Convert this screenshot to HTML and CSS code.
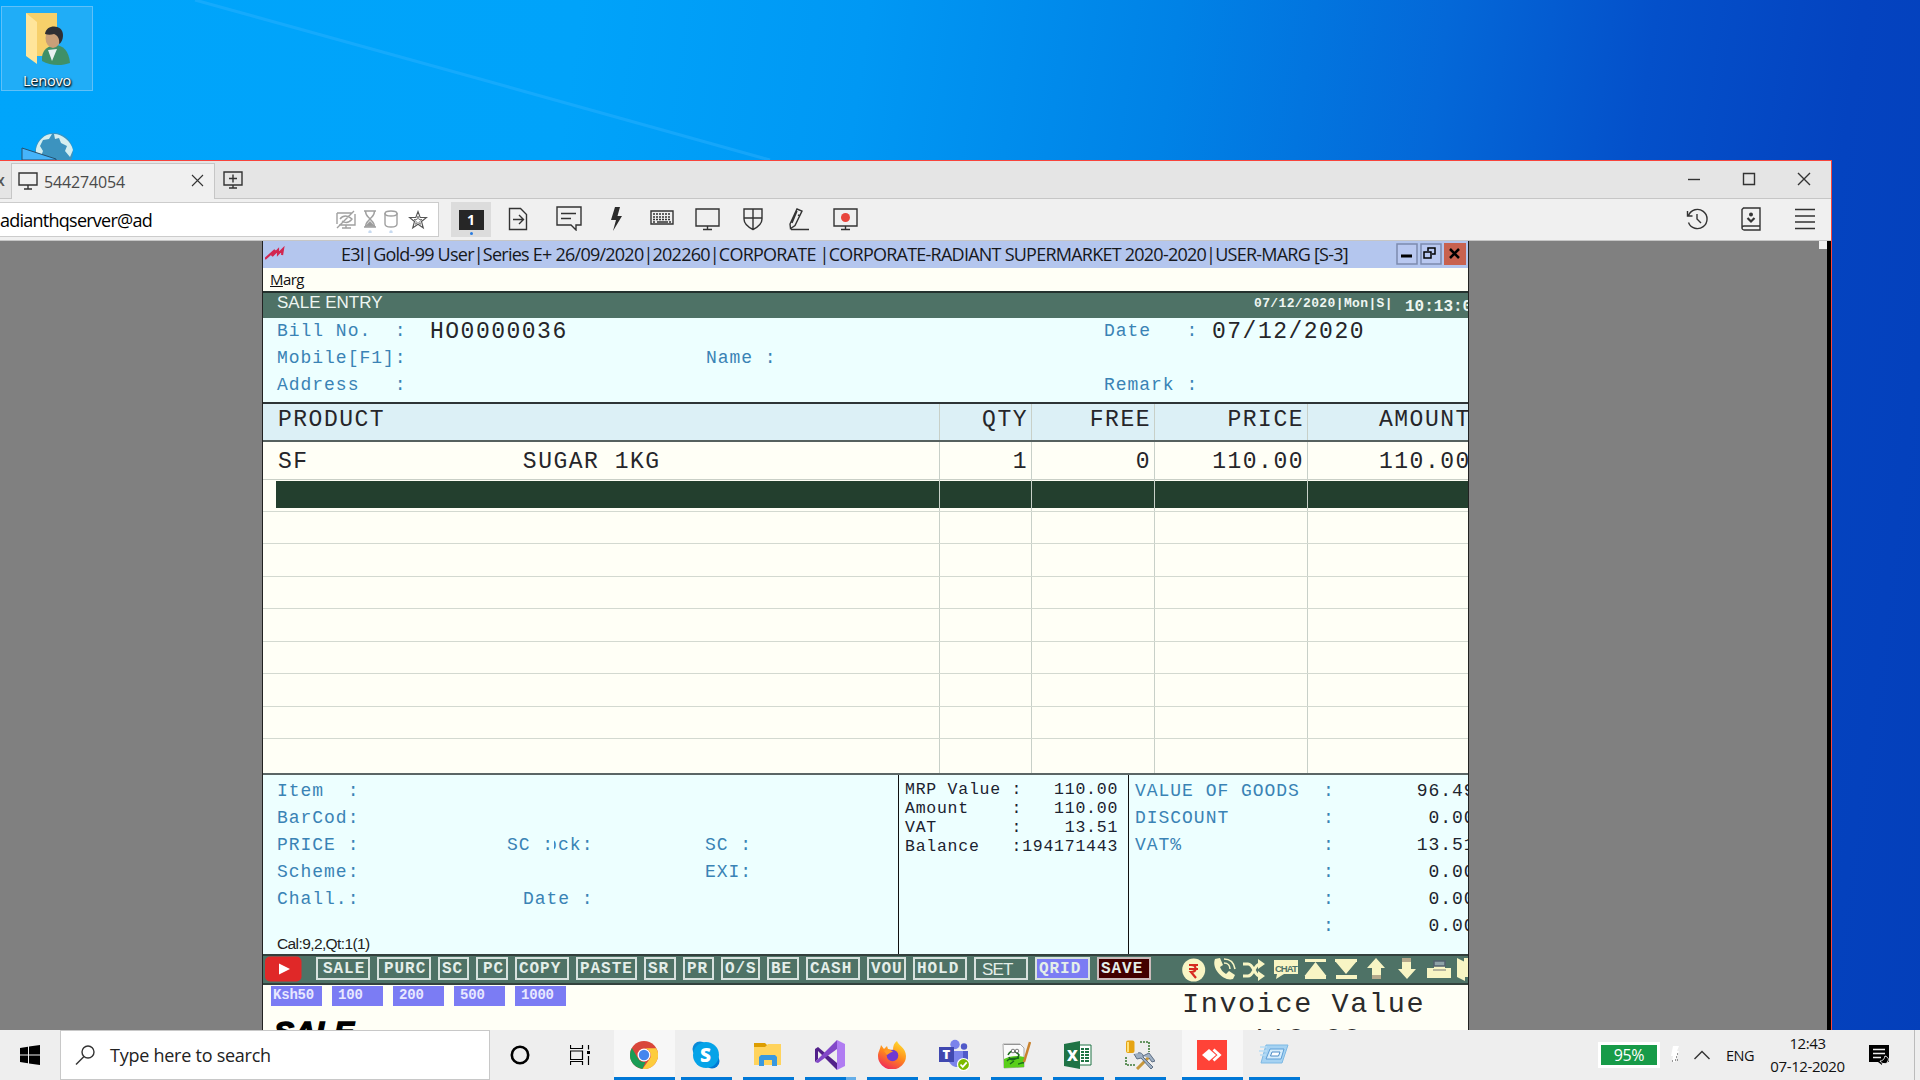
FILE: index.html
```html
<!DOCTYPE html>
<html lang="en">
<head>
<meta charset="utf-8">
<title>Desktop</title>
<link rel="stylesheet" href="styles.css">
</head>
<body>
<div class="desktop">
  <svg class="beam" width="900" height="160" viewBox="0 0 900 160"><defs><linearGradient id="bm" x1="0" y1="1" x2="0.25" y2="0"><stop offset="0" stop-color="#0091f0" stop-opacity="0"/><stop offset="1" stop-color="#0086e6" stop-opacity="0"/></linearGradient></defs><path d="M195 0L480 80 770 160H900V0z" fill="url(#bm)"/><path d="M195 0L480 79 770 160" fill="none" stroke="#35b4ff" stroke-opacity=".4" stroke-width="3"/></svg>
  <div class="shortcut">
    <svg width="48" height="56" viewBox="0 0 48 56"><path d="M3 3h31v43H14z" fill="#f7d06a"/><path d="M3 3l11 9v42L3 46z" fill="#ffe59a"/><path d="M19 47c1-8 6-11 13-12 8 0 14 6 15 18-8 3-20 3-28-2z" fill="#3f9068"/><path d="M25 40l4 11 5-12z" fill="#e8f1f2"/><ellipse cx="30" cy="28" rx="7.500" ry="10" fill="#c99f78"/><path d="M22 24c1-10 18-10 18 1 0 5-2 8-4 9 1-6-2-9-5-10-3 1-6 1-9 0z" fill="#2f2f33"/></svg>
    <span>Lenovo</span>
  </div>
  <svg class="globe" width="56" height="28" viewBox="0 0 56 28"><circle cx="33" cy="20" r="19" fill="#3c93bf"/><path d="M15 17c2-9 9-15 16-15l-3 5-6 1-3 6 3 5-3 8h-4zM33 2c8 0 17 7 19 16l-3 7-5-6 2-5-6-3-2-5-4 1z" fill="#d4eef0"/><path d="M1 16l34 11v1H1z" fill="#46b4fa" stroke="#25506e"/></svg>

  <div class="window">
    <div class="tabs">
      <span class="tab-cut">x</span>
      <div class="tab">
        <svg width="20" height="18" viewBox="0 0 20 18" class="ic"><path d="M1 1h18v12H1zM10 13v4M6 17h8"/></svg>
        <span class="tab-id">544274054</span>
        <svg width="13" height="13" viewBox="0 0 13 13" class="ic thin"><path d="M1 1l11 11M12 1L1 12"/></svg>
      </div>
      <svg width="20" height="18" viewBox="0 0 20 18" class="ic newtab"><path d="M1 1h18v13H1zM10 14v3M6 17h8M10 3.500v8M6 7.500h8"/></svg>
      <div class="winbtns">
        <svg width="14" height="14" viewBox="0 0 14 14" class="ic"><path d="M1 7.500h12"/></svg>
        <svg width="14" height="14" viewBox="0 0 14 14" class="ic"><path d="M1.500 1.500h11v11h-11z"/></svg>
        <svg width="14" height="14" viewBox="0 0 14 14" class="ic"><path d="M1 1l12 12M13 1L1 13"/></svg>
      </div>
    </div>
    <div class="toolbar">
      <div class="address">
        <span class="addr-text">adianthqserver@ad</span>
        <svg width="20" height="20" viewBox="0 0 20 20" class="ic pale"><path d="M1 3h15M19 4v11H3M1 3v11M10 15v3M6 18h9M1 18L18 1M4 9c3-4 8-4 12 0-3 4-7 4-10 2"/></svg>
        <svg width="14" height="26" viewBox="0 0 14 26" class="ic pale"><path d="M1 4h12M1 20h12M2.500 4c0 5 3 6 4.500 8-1.500 2-4.500 3-4.500 8M11.500 4c0 5-3 6-4.500 8 1.500 2 4.500 3 4.500 8"/><path d="M3 19l4-4 4 4z" fill="#999"/><circle cx="7" cy="25" r="1" stroke="#c5d9f0"/></svg>
        <svg width="14" height="26" viewBox="0 0 14 26" class="ic pale"><ellipse cx="7" cy="6.500" rx="6" ry="2.500"/><path d="M1 6v11c0 4 12 4 12 0V6"/><circle cx="7" cy="25" r="1" stroke="#c5d9f0"/></svg>
        <svg width="20" height="20" viewBox="0 0 20 20" class="ic star"><path d="M10 1.500l2.200 6h6.300l-5 4 1.800 6.500L10 14.200 4.700 18l1.800-6.500-5-4h6.300z"/><path d="M10 6l1 3.500h3l-2.300 2 .8 2.800L10 12.600l-2.500 1.700.8-2.800-2.300-2h3z" stroke-width=".7"/></svg>
      </div>
      <div class="monitor-btn"><b>1</b><i></i></div>
      <div class="tools">
        <svg width="20" height="24" viewBox="0 0 20 24" class="ic"><path d="M1.500 1.500h11l6 6v15h-17zM5 12.500h10M11 8l4.500 4.500L11 17"/></svg>
        <svg width="26" height="25" viewBox="0 0 26 25" class="ic"><path d="M1 1h24v18h-5v5l-5-5H1zM5 7.500h15M5 12.500h10"/></svg>
        <svg width="13" height="26" viewBox="0 0 13 26"><path d="M5 1h5L7.500 10H12L3 25l3-11H1z" fill="#2b2b2b"/></svg>
        <svg width="24" height="24" viewBox="0 0 24 24" class="ic"><path d="M1 4h22v13H1z"/><path d="M3 7h18M3 10h18M3 12.500h18" stroke-dasharray="2 1"/><path d="M3 15h2M7 15h11M19 15h2"/></svg>
        <svg width="25" height="24" viewBox="0 0 25 24" class="ic"><path d="M1 2h23v17H1zM12.500 19v4M8 22.500h9"/></svg>
        <svg width="20" height="24" viewBox="0 0 20 24" class="ic"><path d="M1 2h18v10c0 5-4 8-9 10.500C5 20 1 17 1 12zM10 2v20M1 11h18"/></svg>
        <svg width="20" height="24" viewBox="0 0 20 24" class="ic"><path d="M2 22.500h18M1.500 21.500L1 17 8 2l5 2-7 14.500zM8 4l-5 12M9 8l2 1M1.500 21.500L6 18.500"/></svg>
        <svg width="25" height="24" viewBox="0 0 25 24" class="ic"><path d="M1 2h23v17H1zM12.500 19v4M8 22.500h9"/><circle cx="12.500" cy="10.500" r="4.500" fill="#e8453c" stroke="none"/></svg>
      </div>
      <div class="right-tools">
        <svg width="22" height="24" viewBox="0 0 22 24" class="ic"><path d="M2.500 8.500a9.600 9.600 0 1 1 0 7M1.500 4v5h5M11 7v5l4 4"/></svg>
        <svg width="20" height="24" viewBox="0 0 20 24" class="ic"><path d="M1 2.500L2.500 1H19v22H3c-1 0-2-1-2-2zM1 21c0-1 1-2 2-2h16"/><circle cx="10" cy="7.500" r="2" fill="#333" stroke="none"/><path d="M6.500 11l3.500 3.500 3.500-3.500" stroke-width="2.200"/></svg>
        <svg width="22" height="24" viewBox="0 0 22 24" class="ic"><path d="M1 2.500h20M1 9h20M1 15h20M1 21.500h20"/></svg>
      </div>
    </div>
    <div class="viewport">
      <div class="guest">
        <div class="g-title">
          <svg width="22" height="14" viewBox="0 0 22 14"><path d="M0 13l10-9-3 6 6-6 0 4 5-5-1 6" fill="none" stroke="#d2264f" stroke-width="2.200"/></svg>
          <span class="g-caption">E3I|Gold-99 User|Series E+ 26/09/2020|202260|CORPORATE |CORPORATE-RADIANT SUPERMARKET 2020-2020|USER-MARG [S-3]</span>
          <div class="g-btns">
            <svg width="22" height="22" viewBox="0 0 22 22"><rect x="1" y="1" width="20" height="20" fill="#b9c8f0" stroke="#7c8aae" stroke-width="1.500"/><path d="M5 13h11" stroke="#000" stroke-width="3"/></svg>
            <svg width="22" height="22" viewBox="0 0 22 22"><rect x="1" y="1" width="20" height="20" fill="#b9c8f0" stroke="#7c8aae" stroke-width="1.500"/><path d="M4 9h7v6H4zM8 8V5h7v6h-3" fill="none" stroke="#000" stroke-width="1.500"/></svg>
            <svg width="22" height="22" viewBox="0 0 22 22"><rect width="22" height="22" fill="#c8624f"/><path d="M6 6l9 9M15 6l-9 9" stroke="#000" stroke-width="2.500"/></svg>
          </div>
        </div>
        <div class="g-menu"><u>M</u>arg</div>
        <div class="g-head"><span class="g-mod">SALE ENTRY</span><span class="g-date">07/12/2020|Mon|S|</span><span class="g-clock">10:13:09</span></div>
        <div class="bill">
          <div class="lbl">Bill No.  :</div><div class="big">HO0000036</div><div></div><div class="lbl">Date   :</div><div class="big">07/12/2020</div>
          <div class="lbl">Mobile[F1]:</div><div></div><div class="lbl">Name :</div><div></div><div></div>
          <div class="lbl">Address   :</div><div></div><div></div><div class="lbl">Remark :</div><div></div>
        </div>
        <div class="items big">
          <div class="row head"><div>PRODUCT</div><div>QTY</div><div>FREE</div><div>PRICE</div><div>AMOUNT</div></div>
          <div class="row first"><div>SF              SUGAR 1KG</div><div>1</div><div>0</div><div>110.00</div><div>110.00</div></div>
          <div class="row sel"><div><i></i></div><div></div><div></div><div></div><div></div></div>
          <div class="row"><div></div><div></div><div></div><div></div><div></div></div>
          <div class="row"><div></div><div></div><div></div><div></div><div></div></div>
          <div class="row"><div></div><div></div><div></div><div></div><div></div></div>
          <div class="row"><div></div><div></div><div></div><div></div><div></div></div>
          <div class="row"><div></div><div></div><div></div><div></div><div></div></div>
          <div class="row"><div></div><div></div><div></div><div></div><div></div></div>
          <div class="row"><div></div><div></div><div></div><div></div><div></div></div>
          <div class="row last"><div></div><div></div><div></div><div></div><div></div></div>
        </div>
        <div class="summary">
          <div class="detail">
            <div class="detail-grid lbl">
              <div>Item  :</div><div></div><div></div>
              <div>BarCod:</div><div></div><div></div>
              <div>PRICE :</div><div class="stock"><span>SC :</span><span class="sliver">o</span><span>ck:</span></div><div>SC :</div>
              <div>Scheme:</div><div></div><div>EXI:</div>
              <div>Chall.:</div><div class="ddate">Date :</div><div></div>
            </div>
            <div class="cal">Cal:9,2,Qt:1(1)</div>
          </div>
          <div class="mrp"><div>MRP Value :   110.00</div><div>Amount    :   110.00</div><div>VAT       :    13.51</div><div>Balance   :194171443</div></div>
          <div class="totals lbl">
            <div>VALUE OF GOODS</div><div>:</div><div class="num"> 96.49</div>
            <div>DISCOUNT</div><div>:</div><div class="num">  0.00</div>
            <div>VAT%</div><div>:</div><div class="num"> 13.51</div>
            <div></div><div>:</div><div class="num">  0.00</div>
            <div></div><div>:</div><div class="num">  0.00</div>
            <div></div><div>:</div><div class="num">  0.00</div>
          </div>
        </div>
        <div class="actions">
          <svg class="yt" width="37" height="26" viewBox="0 0 37 26"><rect y="0.500" width="36.500" height="25" rx="5" fill="#e02828"/><path d="M14 7.500l11 5.500-11 5.500z" fill="#fff"/></svg>
          <div class="keys">
            <span class="r">SALE</span><span class="r">PURC</span><span>SC</span><span class="r">PC</span><span>COPY</span><span>PASTE</span><span>SR</span><span>PR</span><span>O/S</span><span>BE</span><span>CASH</span><span>VOU</span><span>HOLD</span><span class="set">SET</span><span class="qrid">QRID</span><span class="save">SAVE</span>
          </div>
          <svg class="tray-icons" width="288" height="26" viewBox="1180 956 288 26" fill="#f8f5c4">
            <circle cx="1193.700" cy="970" r="11.500"/><path d="M1189 965h9M1189 969h9M1191 965c6 0 6 7 0 7l5 6" fill="none" stroke="#d62a20" stroke-width="2.200"/>
            <path d="M1215 959l5-1 3 7-3 2c1 3 3 5 6 7l3-3 6 4-2 4c-9 3-22-10-18-20z"/><path d="M1224 963c4 0 6 3 6 6M1224 959c6 0 10 4 11 10" fill="none" stroke="#f8f5c4" stroke-width="1.600"/>
            <path d="M1243 964h5c6 0 6 12 12 12M1243 976h5c6 0 6-12 12-12" fill="none" stroke="#f8f5c4" stroke-width="3"/><path d="M1258 959l7 5-7 5zM1258 971l7 5-7 5z"/>
            <path d="M1274 960h24v14h-14l-8 5 1-5h-3z"/><text x="1275" y="971.500" class="chat">CHAT</text>
            <path d="M1305 959h21v3h-21zM1315.500 962l11 14h-22zM1305 975h21v4h-21zM1335 959h22v3h-22zM1335 961h22l-11 13zM1336 975h21v4h-21z"/>
            <path d="M1376 958l9 10h-4v11h-9v-11h-5zM1402 958h9v11h5l-9 10-9-10h4z"/><path d="M1372 975h9v4h-9zM1402 958h9v4h-9z" fill="#b5a98c"/>
            <path d="M1427 968h24v10h-24zM1434 961h11v8h-11z"/><path d="M1434 961h11v5h-11z" fill="#8fa3a8" stroke="#52606e" stroke-width="1.500"/><path d="M1433 970h13" stroke="#777"/>
            <path d="M1457 958l8 4v19l-8-4zM1464 958h4v19h-4z"/>
          </svg>
        </div>
        <div class="footer">
          <div class="f-left">
            <div class="cashkeys"><span class="k0">Ksh50</span><span>100</span><span>200</span><span>500</span><span>1000</span></div>
            <div class="sale">SALE</div>
          </div>
          <div class="invoice"><div>Invoice Value</div><div class="inv-num">110.00</div></div>
        </div>
      </div>
      <div class="corner"></div>
      <div class="edge"></div>
    </div>
  </div>

  <div class="taskbar">
    <div class="start"><svg width="20" height="20" viewBox="0 0 20 20"><path d="M0 3l8-1.200v7.700H0zM9 1.600L20 0v9.500H9zM0 10.500h8v7.700L0 17zM9 10.500h11V20L9 18.400z"/></svg></div>
    <div class="search"><svg width="20" height="20" viewBox="0 0 20 20" class="ic"><circle cx="13" cy="7" r="6"/><path d="M9 11.500L1 19.500"/></svg><span>Type here to search</span></div>
    <div class="cortana"><svg width="20" height="20" viewBox="0 0 20 20"><circle cx="10" cy="10" r="8.200" fill="none" stroke="#000" stroke-width="2.600"/></svg></div>
    <div class="taskview"><svg width="22" height="20" viewBox="0 0 22 20"><path d="M.5 0v3.500h12V0M.5 6h12v8.500H.5zM.5 20v-3.500h12V20M18.500 0v4.500M18.500 11v9" fill="none" stroke="#000" stroke-width="1.200"/><path d="M17 6h3v3h-3z"/></svg></div>
    <div class="apps">
      <div class="app hot"><svg width="28" height="28" viewBox="0 0 28 28"><circle cx="14" cy="14" r="14" fill="#d9463a"/><path d="M1.900 7l6.100 10.500a7 7 0 0 0 7.500 3.400L12.500 28A14 14 0 0 1 1.900 7z" fill="#1a9c55"/><path d="M14 7.200h12.200A14 14 0 0 1 12.500 28L20 17.500a7 7 0 0 0-6-10.300z" fill="#fdcc3d"/><circle cx="14" cy="14" r="6.500" fill="#fff"/><circle cx="14" cy="14" r="5.200" fill="#4586ee"/></svg></div>
      <div class="app"><svg width="28" height="28" viewBox="0 0 28 28"><circle cx="8" cy="8" r="7.500" fill="#0a8ad8"/><circle cx="20" cy="20" r="7.500" fill="#0078d4"/><circle cx="14" cy="14" r="13" fill="#05a3e8"/><text x="8" y="20.500" class="glyph s">S</text></svg></div>
      <div class="app"><svg width="28" height="28" viewBox="0 0 28 28"><path d="M0 2h11l2 2v3H0z" fill="#dd9d00"/><path d="M0 6h11l3-3h13v21H0z" fill="#ffd35c"/><path d="M5 25V16l2-2h14l2 2v9h-5v-6h-8v6z" fill="#3898e0"/></svg></div>
      <div class="app vs"><svg width="30" height="30" viewBox="0 0 30 30"><path d="M0 9l3-2L22 23v7L3 11v8l-3 3z" fill="#52218a"/><path d="M0 22l3 1L22 9V0L3 19z" fill="#8248c8"/><path d="M22 0l8 4v22l-8 4z" fill="#b07cf2"/></svg></div>
      <div class="app"><svg width="28" height="28" viewBox="0 0 28 28"><defs><linearGradient id="ff" x1=".8" y1="0" x2=".3" y2="1"><stop offset="0" stop-color="#ffe02f"/><stop offset=".5" stop-color="#ff8a1c"/><stop offset="1" stop-color="#f0285a"/></linearGradient></defs><path d="M3 4l3 4 3-3 1 3 5 1c0-4 1-7 4-9 1 4 9 7 9 15a14 13.500 0 0 1-28 0c0-4 2-6 3-11z" fill="url(#ff)"/><circle cx="14.500" cy="14.500" r="5.800" fill="#7139d2"/><path d="M6 10c4-3 7-1 9 1-3 0-4 2-6 3z" fill="#ff9a28"/></svg></div>
      <div class="app"><svg width="32" height="32" viewBox="0 0 32 32"><circle cx="17" cy="5.500" r="4.700" fill="#7b83eb"/><circle cx="26" cy="7.500" r="3.200" fill="#5059c9"/><path d="M11 12h14v13c-5 6-13 2-14-3z" fill="#7b83eb"/><path d="M25 12h5v9c0 3-3 4-5 4z" fill="#5059c9"/><rect x="1" y="8" width="15" height="15" fill="#4048b0"/><text x="4.500" y="20" class="glyph t">T</text><circle cx="25.500" cy="25.500" r="6" fill="#7cba00" stroke="#fff" stroke-width="1.200"/><path d="M22.500 25.500l2.200 2.300 4-4.500" fill="none" stroke="#fff" stroke-width="1.800"/></svg></div>
      <div class="app"><svg width="30" height="30" viewBox="0 0 30 30"><path d="M2 4h17l4 4v19L3 28z" fill="#fafafa" stroke="#aaa"/><path d="M3 19c6-3 13-4 20-2v10L3 28z" fill="#59cf1a"/><path d="M7 15c3-6 8-4 11 0-1 4-8 7-10 2M6 21c3-4 9-2 12-3M9 24l4-3M17 24c2 0 4-2 6-1" fill="none" stroke="#1a6b1c" stroke-width="1.500"/><circle cx="12" cy="11" r="1.800" fill="#fff" stroke="#444" stroke-width=".7"/><circle cx="16" cy="11" r="1.800" fill="#fff" stroke="#444" stroke-width=".7"/><path d="M29 2l-6 20" stroke="#c9822e" stroke-width="2.500"/><path d="M3.500 4.500h15" stroke="#555" stroke-dasharray="1 1"/></svg></div>
      <div class="app"><svg width="28" height="28" viewBox="0 0 28 28"><path d="M14 4h13v20H14z" fill="#fff" stroke="#1f7345"/><path d="M17 7h3v2h-3zM21 7h4v2h-4zM17 10h3v2h-3zM21 10h4v2h-4zM17 13h3v2h-3zM21 13h4v2h-4zM17 16h3v2h-3zM21 16h4v2h-4zM17 19h3v2h-3zM21 19h4v2h-4z" fill="#1f7345"/><path d="M0 3l16-3v28L0 25z" fill="#1f7345"/><text x="3" y="20" class="glyph x">X</text></svg></div>
      <div class="app"><svg width="30" height="30" viewBox="0 0 30 30"><path d="M15 2h9v10M1 17v8h9" fill="none" stroke="#3d7a38" stroke-width="1.600" stroke-dasharray="2 1"/><rect x="1" y="0.500" width="8.500" height="12.500" rx="2" fill="#e6a414"/><path d="M3 2v10" stroke="#ffe27a" stroke-width="2"/><path d="M12 29l12-12" stroke="#c7983c" stroke-width="3"/><path d="M9 14l3 5 4-1 10 11 2-2-10-10c1-3-3-5-5-4M18 16l6-3 6 8-3 1-3-4" fill="#9fb0c4" stroke="#5d6e84"/></svg></div>
      <div class="app hot any"><svg width="30" height="30" viewBox="0 0 30 30"><path d="M0 0h30v30H0z" fill="#ff4338"/><path d="M5 15l7-6 7 6-7 6z" fill="#fff"/><path d="M16 9.500l6 5.500-6 5.500" fill="none" stroke="#fff" stroke-width="2.800" transform="translate(.5)"/></svg></div>
      <div class="app"><svg width="32" height="24" viewBox="0 0 32 24"><path d="M8 2h22l-6 18H3z" fill="#a5d2f2" stroke="#7db9e4"/><path d="M12 6h14l-3 10H8z" fill="#d5ecfb" stroke="#5f9fd6"/><path d="M14 9h8l-1.500 4h-8z" fill="#fff" stroke="#4e8cc6"/><path d="M2 4h7M1 8h8M2 12h6" stroke="#b8ddf5" stroke-width="1.500"/></svg></div>
    </div>
    <div class="tray">
      <div class="battery">95%</div>
      <svg width="10" height="20" viewBox="0 0 10 20"><path d="M3 1h6L7 6h2L5 17H2l1-6H1z" fill="#fff"/><path d="M7 9h1M6 12h1M5 15h1M2 16h1M7 15h1" stroke="#333"/></svg>
      <svg width="18" height="12" viewBox="0 0 18 12" class="ic"><path d="M1.500 10L9 2.500l7.500 7.500"/></svg>
      <span class="lang">ENG</span>
      <div class="clock"><span>12:43</span><span>07-12-2020</span></div>
      <svg width="21" height="21" viewBox="0 0 21 21"><path d="M0 0h20v17h-7v3l-4-3H0z"/><path d="M4 4.500h12M4 8.500h12M4 12.500h8" stroke="#eee" stroke-width="1.300"/><path d="M16 11c-1 4-3 5-5 5 1 3 7 4 8 0 1-2 0-4-3-5z" fill="#000" stroke="#eee"/></svg>
      <i class="show"></i>
    </div>
  </div>
</div>
</body>
</html>
```
FILE: styles.css
```css
* { box-sizing: border-box; }
body { margin: 0; font-family: "Open Sans", "Noto Sans", sans-serif; color: #111; }
svg { display: block; flex: none; }
.desktop { position: relative; width: 1920px; height: 1080px; overflow: hidden; display: flex; flex-direction: column; justify-content: flex-end;
  background: linear-gradient(98deg, #00a5fb 0, #00a3fa 28%, #0098f4 42%, #0082e6 57%, #0468d8 70%, #0450ca 80%, #0443c0 90%, #043fba 100%); }
.beam { position: absolute; left: 0; top: 0; }
.ic { fill: none; stroke: #333; stroke-width: 1.4; }
.thin { stroke-width: 1.1; }
.pale { stroke: #a0a0a0; }
.star { stroke: #555; stroke-width: 1.1; }

.shortcut { position: absolute; left: 1px; top: 6px; width: 92px; height: 85px; border: 1px solid #5fc0f8; background: #20adf7; color: #fff; font-size: 14.5px; text-shadow: 1px 1px 2px #000, 0 1px 2px #000; display: flex; flex-direction: column; align-items: center; padding-top: 3px; }
.shortcut span { line-height: 18px; margin-top: 6px; letter-spacing: -.2px; }
.globe { position: absolute; left: 21px; top: 132px; }

.window { position: absolute; left: 0; top: 160px; width: 1832px; height: 920px; border: solid #f8443c; border-width: 1px 1px 0 0; background: #f0f0f0; display: flex; flex-direction: column; }
.tabs { height: 38px; background: #e5e5e5; border-bottom: 1px solid #c6c6c6; display: flex; align-items: center; }
.tab-cut { width: 11px; font-size: 16px; font-weight: 600; color: #555; text-indent: -4px; overflow: hidden; padding-right: 5px; }
.tab { align-self: flex-end; width: 204px; height: 36px; margin-bottom: -1px; background: #f0f0f0; border: 1px solid #c6c6c6; border-bottom: 0; display: flex; align-items: center; padding: 0 10px 0 6px; }
.tab svg { margin-bottom: 2px; }
.tab-id { flex: 1; margin-left: 6px; font-size: 16px; letter-spacing: -.15px; color: #4a4a4a; }
.newtab { margin-left: 8px; }
.winbtns { margin-left: auto; display: flex; gap: 41px; padding-right: 20px; margin-bottom: 2px; }
.toolbar { height: 42px; border-bottom: 1px solid #c6c6c6; display: flex; align-items: center; padding-right: 15px; }
.address { width: 439px; height: 35px; background: #fff; border: 1px solid #ccc; border-left: 0; display: flex; align-items: center; padding-right: 10px; }
.addr-text { flex: 1; font-size: 18px; letter-spacing: -.75px; color: #000; }
.address svg + svg { margin-left: 7px; }
.address svg.star { margin-left: 10px; }
.monitor-btn { margin-left: 12px; width: 40px; height: 35px; background: #dcdcdc; display: flex; flex-direction: column; align-items: center; padding-top: 8px; gap: 2px; }
.monitor-btn b { width: 25px; height: 20px; background: #262626; color: #fff; font-size: 14px; line-height: 20px; text-align: center; }
.monitor-btn i { width: 3px; height: 3px; border-radius: 2px; background: #2b7de0; }
.tools { display: grid; grid-template-columns: 53px 50px 45px 45px 46px 46px 46px 46px; justify-items: center; align-items: center; margin-bottom: 2px; }
.right-tools { margin-left: auto; display: flex; gap: 33px; margin-bottom: 1px; }

.viewport { flex: 1; background: #808080; display: flex; }
.guest { margin-left: 262px; width: 1207px; height: 789px; border: solid #222; border-width: 0 1px; background: #fffff6; overflow: hidden; display: flex; flex-direction: column; }
.corner { margin-left: auto; width: 8px; height: 8px; background: #f0f0f0; }
.edge { width: 4px; background: #000; }
.guest > div { flex: none; }
.g-title { height: 27px; background: #b4c6ee; display: flex; align-items: center; padding: 0 2px; }
.g-caption { margin-left: 54px; flex: 1; font-size: 18px; letter-spacing: -.76px; line-height: 24px; padding-bottom: 2px; color: #16181c; white-space: pre; }
.g-title > svg { align-self: flex-start; margin-top: 5px; }
.g-btns { display: flex; gap: 2px; margin-bottom: 2px; }
.g-menu { height: 23px; padding-left: 7px; font-size: 15px; letter-spacing: -.6px; line-height: 23px; }
.g-head { height: 27px; border-top: 2px solid #24312e; background: #4e7266; display: flex; color: #eef6f2; white-space: pre; }
.g-mod { flex: 1; padding-left: 14px; font: 17px/20px "Liberation Sans", sans-serif; letter-spacing: 0; }
.g-date { width: 151px; font: bold 13px/21px "Liberation Mono", monospace; letter-spacing: .37px; }
.g-clock { width: 63px; overflow: hidden; font: bold 16px/28px "Liberation Mono", monospace; letter-spacing: 0; }

.lbl { font: 18px/27px "Liberation Mono", monospace; letter-spacing: .97px; color: #3a83b5; white-space: pre; }
.big { font: 23px/28px "Liberation Mono", monospace; letter-spacing: 1.5px; color: #26262a; white-space: pre; }
.bill { height: 84px; background: #edffff; padding: 0 0 0 14px; display: grid; grid-template-columns: 153px 276px 398px 108px 1fr; grid-template-rows: 27px 27px 27px; }
.items { height: 371px; border-top: 2px solid #2e3436; display: flex; flex-direction: column; }
.row { flex: 1; display: grid; grid-template-columns: 676px 92px 123px 153px 161px; border-bottom: 1px solid #d3d9d0; }
.row > div + div { border-left: 1px solid #c8d0c8; text-align: right; padding-right: 3px; }
.row > div:last-child { text-align: left; padding-left: 71px; padding-right: 0; overflow: hidden; }
.row > div:first-child { padding-left: 15px; }
.row.head { flex: none; height: 38px; background: #dcf0f6; border-bottom: 2px solid #56615f; line-height: 33px; }
.row.first { flex: none; height: 38px; line-height: 41px; border-bottom-color: #c9cfc6; }
.row.sel { flex: none; height: 32px; }
.row.sel > div { background: linear-gradient(#fffff6 1px, #233f2e 1px 28px, #fffff6 28px); }
.row.sel > div:first-child { padding: 0 0 0 13px; background: #fffff6; }
.row.sel i { display: block; height: 27px; margin-top: 1px; background: #233f2e; }
.row.last { flex: none; height: 34px; border-bottom: 0; }

.summary { height: 183px; border: solid #5b6665; border-width: 2px 0; border-bottom-color: #33403d; background: #edffff; display: flex; }
.detail { width: 635px; padding-left: 14px; padding-top: 3px; }
.detail-grid { display: grid; grid-template-columns: 230px 198px 1fr; grid-auto-rows: 27.1px; }
.stock { display: flex; }
.sliver { width: 4px; overflow: hidden; text-indent: -8px; }
.ddate { padding-left: 16px; }
.cal { margin-top: 21px; font: 15.5px/19px "Liberation Sans", sans-serif; letter-spacing: -.6px; color: #222; }
.mrp { width: 230px; border-left: 1px solid #111; padding: 5px 0 0 6px; font: 16.5px/19px "Liberation Mono", monospace; letter-spacing: .75px; white-space: pre; color: #1b2230; }
.totals { flex: 1; border-left: 1px solid #111; padding: 3px 0 0 6px; display: grid; grid-template-columns: 188px 82px 1fr; grid-auto-rows: 27.1px; overflow: hidden; }
.num { color: #20242e; overflow: hidden; }
.actions { height: 29px; background: #4e7266; border-bottom: 2px solid #33423d; display: flex; overflow: hidden; }
.yt { margin-left: 2px; }
.keys { margin-left: 14px; display: grid; grid-template-columns: 61px 61px 38px 39px 61px 68px 39px 38px 46px 39px 61px 46px 61px 61px 62px 54px; padding-top: 1px; }
.keys span { height: 23px; border: 2px solid #d8e2de; margin-right: 7px; font: bold 16px/20px "Liberation Mono", monospace; letter-spacing: .95px; color: #e4eee9; padding-left: 2px; white-space: pre; overflow: hidden; }
.keys .r { padding-left: 5px; }
.keys .set { font: 17px/22px "Liberation Sans", sans-serif; padding-left: 6px; letter-spacing: -.9px; }
.keys .qrid { background: #7b7cf4; }
.keys .save { background: #420000; margin-right: 0; border-color: #cbbcbc; }
.tray-icons { margin-left: 29px; }
.chat { font: bold 9.5px "Liberation Sans", sans-serif; fill: #4e7266; letter-spacing: -1px; }
.footer { display: flex; justify-content: space-between; height: 60px; }
.cashkeys { display: flex; gap: 10px; padding-left: 8px; padding-top: 1px; }
.cashkeys span { width: 51px; height: 20px; background: #7b7cf4; color: #e8e8ff; font: bold 14px/19px "Liberation Mono", monospace; padding-left: 6px; letter-spacing: -.2px; }
.cashkeys .k0 { padding-left: 2px; }
.sale { padding-left: 11px; margin-top: 9px; font: italic bold 30px/34px "Liberation Sans", sans-serif; color: #000; -webkit-text-stroke: 1.5px #000; }
.invoice { width: 286px; padding-top: 2px; font: 28.5px/35px "Liberation Mono", monospace; letter-spacing: 1.6px; color: #2b2b2b; white-space: pre; }
.inv-num { padding-left: 68px; }

.taskbar { position: relative; height: 50px; background: #eee; display: flex; }
.start { width: 60px; display: flex; align-items: center; justify-content: center; }
.search { width: 430px; background: #fff; border: 1px solid #c8c8c8; display: flex; align-items: center; padding-left: 14px; gap: 15px; font-size: 18px; letter-spacing: -.25px; color: #222; }
.cortana { width: 60px; display: flex; align-items: center; justify-content: center; }
.taskview { width: 63px; padding-left: 20px; display: flex; align-items: center; }
.apps { display: flex; }
.app { width: 62px; height: 50px; display: flex; align-items: center; justify-content: center; background: linear-gradient(#0078d7, #0078d7) 6px 47px / 51px 3px no-repeat; }
.app.hot { background: linear-gradient(#0078d7, #0078d7) 0 47px / 61px 3px no-repeat, #f7f7f7; border: 0 solid #eee; border-width: 0 0 0 1px; padding-right: 1px; }
.app.vs { background-image: linear-gradient(90deg, #0078d7 41px, #66aee8 41px); }
.app.any { margin-left: 10px; }
.glyph { font-family: "Open Sans", sans-serif; font-weight: 800; fill: #fff; }
.s { font-size: 19px; }
.t { font-size: 13px; }
.x { font-size: 15px; }
.tray { margin-left: auto; display: flex; align-items: center; }
.battery { width: 62px; height: 26px; border: 3px solid #fff; background: #179b48; color: #fff; font-size: 16px; line-height: 20px; text-align: center; letter-spacing: -.4px; margin-right: 10px; }
.lang { margin: 0 15px 0 15px; font-size: 14.5px; letter-spacing: -.5px; }
.tray .ic { margin-left: 13px; }
.clock { width: 77px; text-align: center; display: flex; flex-direction: column; font-size: 15px; letter-spacing: -.4px; line-height: 23px; margin-right: 23px; white-space: nowrap; }
.show { width: 6px; height: 50px; border-left: 1px solid #bbb; margin-left: 24px; }
```
